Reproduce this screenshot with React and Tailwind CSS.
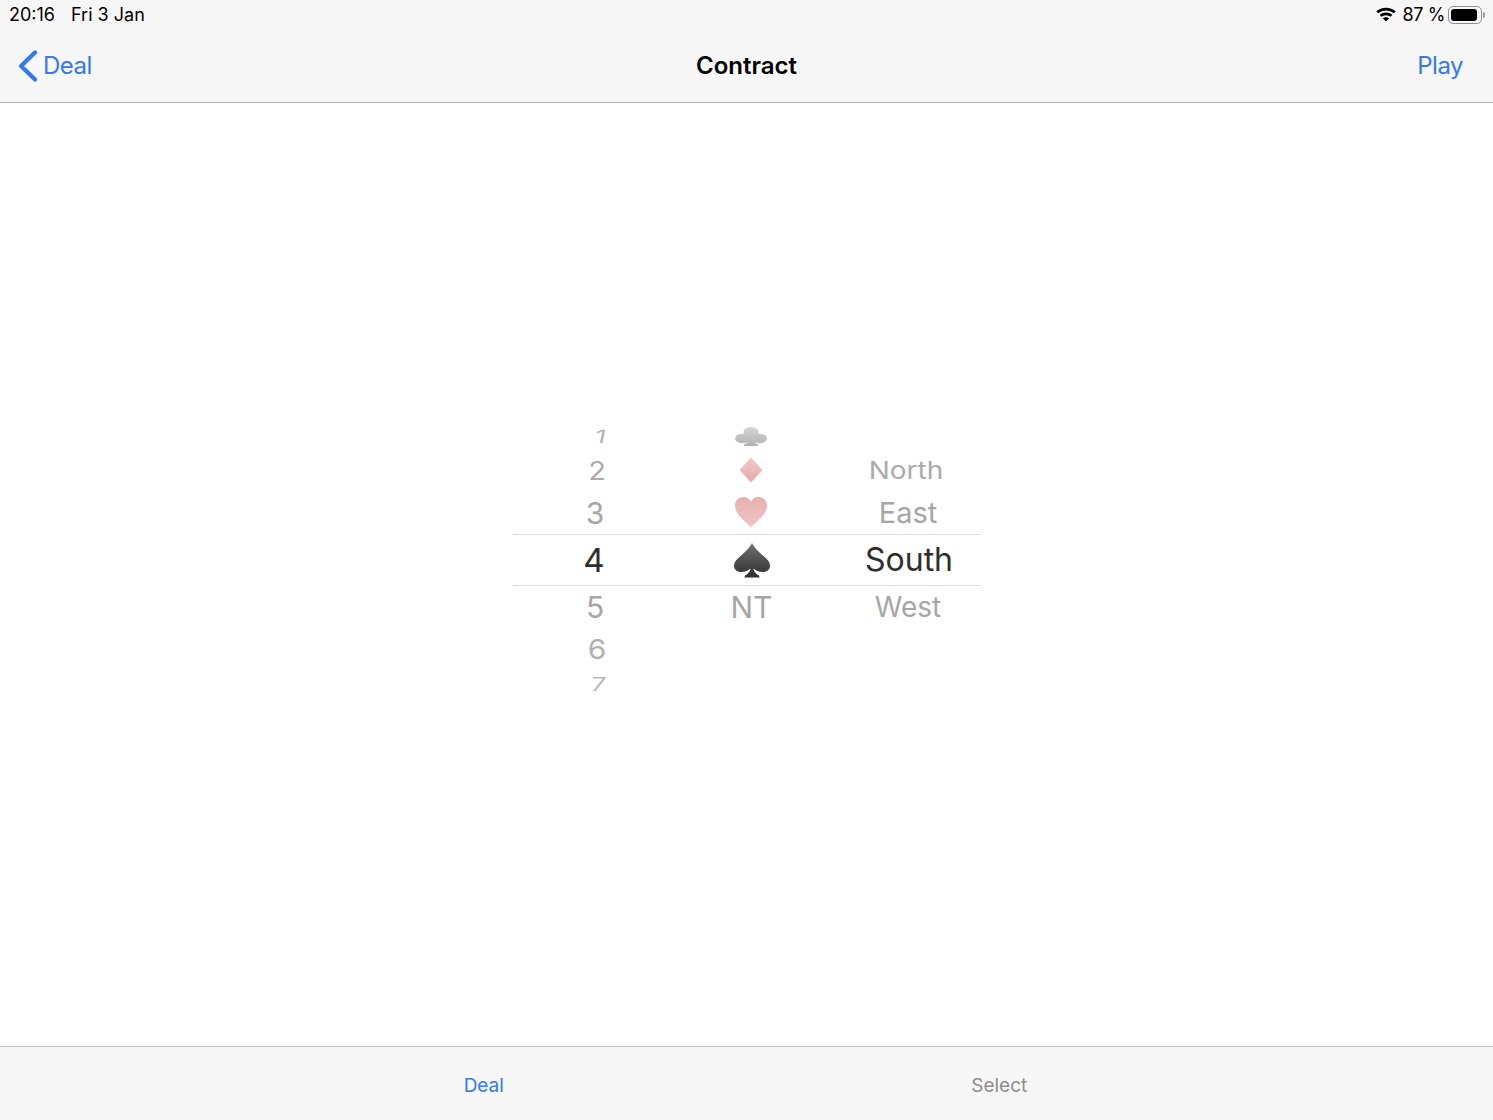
import React from "react";

const font = "font-['Inter','Liberation_Sans',sans-serif]";

const Club = () => (
  <svg width="32" height="19" viewBox="0 0 32 19">
    <defs>
      <linearGradient id="club" gradientUnits="userSpaceOnUse" x1="0" y1="0" x2="0" y2="19">
        <stop offset="0" stopColor="#d6d6d6" />
        <stop offset="1" stopColor="#b0b0b0" />
      </linearGradient>
    </defs>
    <g fill="url(#club)">
      <ellipse cx="16" cy="5" rx="7.500" ry="5" />
      <ellipse cx="7.500" cy="11.500" rx="7.500" ry="4.700" />
      <ellipse cx="24.500" cy="11.500" rx="7.500" ry="4.700" />
      <path d="M13 8L19 8L19 13C19 15 21 16.500 23 17.500L23 19L9 19L9 17.500C11 16.500 13 15 13 13Z" />
    </g>
  </svg>
);

const Diamond = () => (
  <svg width="24" height="26" viewBox="0 0 24 26">
    <defs>
      <linearGradient id="diamond" x1="0" y1="0" x2="0" y2="1">
        <stop offset="0" stopColor="#f3c9c9" />
        <stop offset="1" stopColor="#e6a9a9" />
      </linearGradient>
    </defs>
    <path fill="url(#diamond)" d="M12 0.500L23.500 13L12 25.500L0.500 13Z" />
  </svg>
);

const Heart = () => (
  <svg width="32" height="31" viewBox="0 0 32 31">
    <defs>
      <linearGradient id="heart" x1="0" y1="0" x2="0" y2="1">
        <stop offset="0" stopColor="#e8aeae" />
        <stop offset="1" stopColor="#f0c6c6" />
      </linearGradient>
    </defs>
    <path
      fill="url(#heart)"
      d="M16 30.500C15 29 13 27.500 10.500 25C6.500 21.500 0 15.500 0 8.500C0 3.500 3.500 0 8.500 0C11.800 0 14.500 1.800 16 4.500C17.500 1.800 20.200 0 23.500 0C28.500 0 32 3.500 32 8.500C32 15.500 25.500 21.500 21.500 25C19 27.500 17 29 16 30.500Z"
    />
  </svg>
);

const Spade = () => (
  <svg width="36" height="35" viewBox="0 0 36 35">
    <defs>
      <linearGradient id="spade" x1="0" y1="0" x2="0" y2="1">
        <stop offset="0" stopColor="#707070" />
        <stop offset="1" stopColor="#2f2f2f" />
      </linearGradient>
    </defs>
    <path
      fill="url(#spade)"
      d="M18 0C16 4.500 11 9 6.500 13C2.500 16.500 0 19 0 22.500C0 26.500 3 29 7 29C11 29 14 27.500 16.500 25.500C16.300 28.500 14 31 11 32.500L10.500 34.500L25.500 34.500L25 32.500C22 31 19.700 28.500 19.500 25.500C22 27.500 25 29 29 29C33 29 36 26.500 36 22.500C36 19 33.500 16.500 29.500 13C25 9 20 4.500 18 0Z"
    />
  </svg>
);

const rows = [
  { h: "h-[26px]", num: "1", numCls: "text-[27px] text-[#b5b5b5] [transform:translateX(5px)_scaleY(0.68)_skewX(-8deg)]", suit: <Club />, dir: "" },
  { h: "h-[42px]", num: "2", numCls: "text-[29px] text-[#ababab] [transform:translateX(2px)_scaleY(0.88)]", suit: <Diamond />, dir: "North", dirCls: "text-[28px] text-[#ababab] [transform:translateX(-2px)_scaleY(0.88)]" },
  { h: "h-[43px]", num: "3", numCls: "text-[30px] text-[#a6a6a6]", suit: <Heart />, dir: "East", dirCls: "text-[29px] text-[#a6a6a6]" },
  { h: "h-[52px]", num: "4", numCls: "text-[33px] text-[#2e2e2e] [transform:translateX(-1px)]", suit: <div className="pl-[2px]"><Spade /></div>, dir: "South", dirCls: "text-[32px] text-[#2e2e2e] [transform:translateX(1px)]", selected: true },
  { h: "h-[42px]", num: "5", numCls: "text-[30px] text-[#a6a6a6]", suit: <span className="pl-[1px] text-[30px] leading-none text-[#a6a6a6]">NT</span>, dir: "West", dirCls: "text-[28px] text-[#a6a6a6]" },
  { h: "h-[42px]", num: "6", numCls: "text-[30px] text-[#b0b0b0] [transform:translateX(2px)_scaleY(0.88)]" },
  { h: "h-[28px]", num: "7", numCls: "text-[27px] text-[#bababa] [transform:translateX(4px)_scaleY(0.72)_skewX(-4deg)]" },
];

const PickerRow = ({ row }) => (
  <div
    className={`grid grid-cols-[164px_148px_1fr] items-center ${row.h} ${
      row.selected ? "border-y border-[#dcdcdc]" : ""
    }`}
  >
    <div className="flex justify-center">
      <span className={`block leading-none ${row.numCls}`}>{row.num}</span>
    </div>
    <div className="flex justify-center">{row.suit}</div>
    <div className="flex justify-center pl-[11px]">
      <span className={`block leading-none ${row.dirCls || ""}`}>{row.dir}</span>
    </div>
  </div>
);

const Wifi = () => (
  <svg width="20" height="15" viewBox="0 0 20 15" fill="none" stroke="#000" strokeWidth="2.600">
    <path d="M1.200 5.300C6 1 14 1 18.800 5.300" />
    <path d="M4.500 8.700C7.500 6.200 12.500 6.200 15.500 8.700" />
    <path d="M10 14.500L6.800 11.300C8.500 10 11.500 10 13.200 11.300Z" fill="#000" stroke="none" />
  </svg>
);

const Battery = () => (
  <div className="flex items-center">
    <div className="flex h-[18px] w-[34px] items-center rounded-[5px] border border-[#8e8e8e] p-[2px]">
      <div className="h-full w-[26px] rounded-[3px] bg-black" />
    </div>
    <div className="ml-[1px] h-[6px] w-[2px] rounded-r-sm bg-[#9a9a9a]" />
  </div>
);

export default function App() {
  return (
    <div className={`flex h-[1120px] w-[1493px] flex-col overflow-hidden bg-white ${font}`}>
      <header className="h-[103px] border-b border-[#b4b4b4] bg-[#f7f7f7]">
        <div className="flex h-[29px] items-center justify-between pl-[9px] pr-[8px] text-[18px] text-black">
          <div className="flex gap-[16px]">
            <span>20:16</span>
            <span>Fri 3 Jan</span>
          </div>
          <div className="flex items-center">
            <Wifi />
            <span className="ml-[7px] mr-[3px] tracking-[-0.4px]">87 %</span>
            <Battery />
          </div>
        </div>
        <div className="grid h-[73px] grid-cols-[1fr_auto_1fr] items-center pl-[18px] pr-[30px] text-[24px] tracking-[-0.5px] text-[#3478f6]">
          <div className="flex items-center gap-[5px]">
            <svg width="20" height="32" viewBox="0 0 20 32" fill="none" stroke="#3478f6" strokeWidth="4.200" strokeLinecap="round" strokeLinejoin="round">
              <path d="M17 2.500L3 16L17 29.500" />
            </svg>
            <span>Deal</span>
          </div>
          <h1 className="pl-[12px] font-semibold tracking-normal text-black">Contract</h1>
          <span className="text-right">Play</span>
        </div>
      </header>

      <main className="flex flex-1 justify-center pt-[320px]">
        <div className="w-[467px]">
          {rows.map((row) => (
            <PickerRow key={row.num} row={row} />
          ))}
        </div>
      </main>

      <footer className="grid h-[74px] grid-cols-2 border-t border-[#c4c4c4] bg-[#f7f7f7] pl-[226px] pr-[236px] pt-[6px] text-[19px]">
        <div className="flex items-center justify-center text-[#3478f6]">Deal</div>
        <div className="flex items-center justify-center text-[#8e8e8e]">Select</div>
      </footer>
    </div>
  );
}
